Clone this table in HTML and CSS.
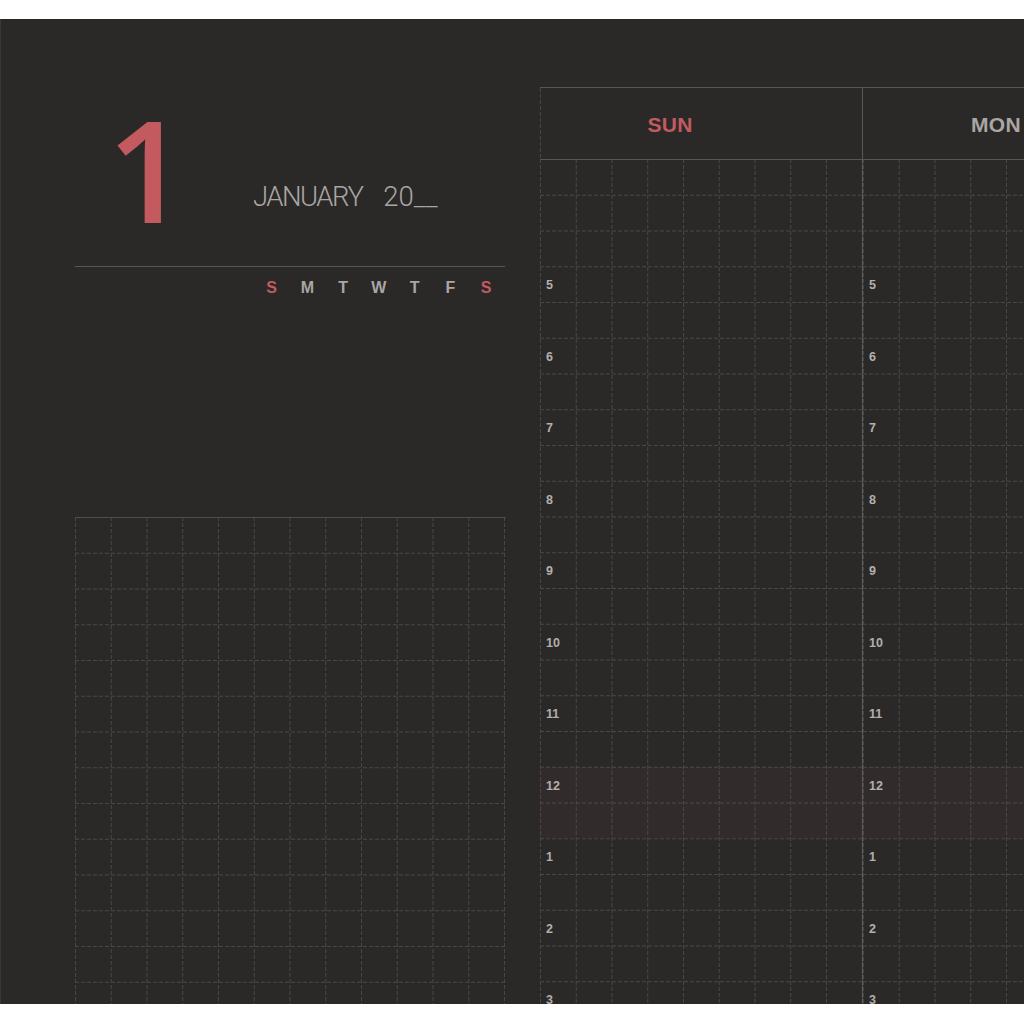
FILE: index.html
```html
<!DOCTYPE html>
<html lang="en">
<head>
<meta charset="utf-8">
<title>Weekly planner – January</title>
<link rel="stylesheet" href="styles.css">
</head>
<body>
<div class="sheet">
  <section class="month">
    <div class="month-head">
      <div class="big-day">1</div>
      <div class="month-title"><span class="month-name">JANUARY</span><span class="year">20__</span></div>
    </div>
    <div class="weekdays">
      <span class="wd red">S</span><span class="wd">M</span><span class="wd">T</span><span class="wd">W</span><span class="wd">T</span><span class="wd">F</span><span class="wd red">S</span>
    </div>
    <div class="notes grid-bg"></div>
  </section>

  <section class="week">
    <div class="day">
      <div class="day-head first"><span class="day-name red">SUN</span></div>
      <div class="day-body grid-bg">
        <div class="hour"><span>5</span></div>
        <div class="hour"><span>6</span></div>
        <div class="hour"><span>7</span></div>
        <div class="hour"><span>8</span></div>
        <div class="hour"><span>9</span></div>
        <div class="hour"><span>10</span></div>
        <div class="hour"><span>11</span></div>
        <div class="hour noon"><span>12</span></div>
        <div class="hour"><span>1</span></div>
        <div class="hour"><span>2</span></div>
        <div class="hour"><span>3</span></div>
      </div>
    </div>
    <div class="day">
      <div class="day-head"><span class="day-name">MON</span></div>
      <div class="day-body grid-bg">
        <div class="hour"><span>5</span></div>
        <div class="hour"><span>6</span></div>
        <div class="hour"><span>7</span></div>
        <div class="hour"><span>8</span></div>
        <div class="hour"><span>9</span></div>
        <div class="hour"><span>10</span></div>
        <div class="hour"><span>11</span></div>
        <div class="hour noon"><span>12</span></div>
        <div class="hour"><span>1</span></div>
        <div class="hour"><span>2</span></div>
        <div class="hour"><span>3</span></div>
      </div>
    </div>
  </section>
</div>
</body>
</html>
```

FILE: styles.css
```css
:root {
  --cell: 35.75px;
  --bg: #2b2928;
  --dash: #4a4645;
  --rule: #585554;
  --red: #c25a60;
  --grey: #a9a6a4;
}

html, body {
  margin: 0;
  padding: 0;
  background: #ffffff;
}

body {
  font-family: "Liberation Sans", Arial, sans-serif;
}

.sheet {
  margin-top: 19px;
  height: 985px;
  background: var(--bg);
  box-shadow: inset 1px 0 0 #3b3938;
  display: flex;
  align-items: flex-start;
  overflow: hidden;
}

.red { color: var(--red); }

.grid-bg {
  background-image:
    conic-gradient(at 1px 4px, transparent 75%, var(--dash) 0),
    conic-gradient(at 4px 1px, transparent 75%, var(--dash) 0);
  background-size: var(--cell) 6px, 6px var(--cell);
  background-origin: border-box;
}

/* ---------- left: month block ---------- */
.month {
  flex: none;
  width: 431px;
  margin-left: 75px;
  height: 100%;
  display: flex;
  flex-direction: column;
}

.month-head {
  box-sizing: border-box;
  height: 248px;
  border-bottom: 1px solid var(--rule);
  display: flex;
  align-items: flex-start;
  margin-right: 1px;
}

.big-day {
  font-family: "Open Sans", Roboto, sans-serif;
  font-weight: 600;
  font-size: 141px;
  line-height: 1;
  color: var(--red);
  margin-left: 32px;
  margin-top: 79px;
  width: 81px;
}

.month-title {
  margin-left: 65px;
  margin-top: 164px;
  font-family: Roboto, "Open Sans", sans-serif;
  font-weight: 300;
  font-size: 27.5px;
  line-height: 1;
  color: var(--grey);
  display: flex;
  gap: 21px;
}

.month-name {
  letter-spacing: -1.5px;
}

.weekdays {
  display: grid;
  grid-template-columns: repeat(7, var(--cell));
  margin-left: calc(var(--cell) * 5);
  line-height: 41px;
  height: 41px;
}

.wd {
  text-align: center;
  font-weight: 700;
  font-size: 16px;
  color: var(--grey);
}
.wd.red { color: var(--red); }

.notes {
  margin-top: 209px;
  flex: 1;
  border-top: 1px solid #4f4c4b;
}

/* ---------- right: week columns ---------- */
.week {
  flex: none;
  margin-left: 34px;
  margin-top: 68px;
  display: flex;
  border-top: 1px solid var(--rule);
}

.day {
  flex: none;
  width: 322px;
  display: flex;
  flex-direction: column;
}
.day + .day {
  border-left: 1px solid #5a5756;
}

.day-head {
  flex: none;
  height: 71px;
  box-sizing: border-box;
  padding-right: 62px;
  display: flex;
  align-items: center;
  justify-content: center;
}
.day-head.first {
  background-image: conic-gradient(at 1px 4px, transparent 75%, var(--dash) 0);
  background-size: 322px 6px;
}

.day-name {
  font-weight: 700;
  font-size: 21px;
  letter-spacing: 0.3px;
  color: var(--grey);
  margin-top: 2px;
}
.day-name.red { color: var(--red); }
.day-head:not(.first) .day-name { margin-left: 6px; }

.day-body {
  flex: none;
  border-top: 1px solid var(--rule);
  padding-top: 106.25px;
}

.hour {
  height: calc(var(--cell) * 2);
  line-height: 39px;
  padding-left: 6px;
  font-size: 12.5px;
  font-weight: 700;
  color: #b2afad;
}

.hour.noon {
  background: rgba(143, 91, 90, 0.07);
}
```
